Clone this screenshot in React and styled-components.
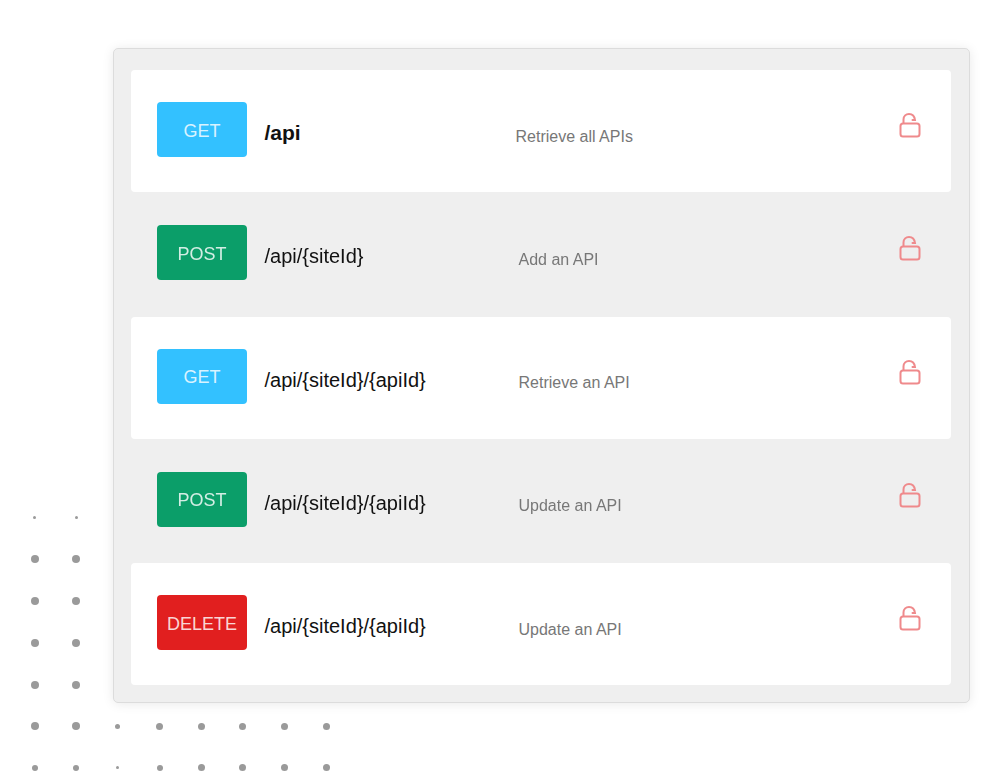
import React from "react";
import styled, { createGlobalStyle } from "styled-components";

const endpoints = [
  { method: "GET", path: "/api", text: "Retrieve all APIs", bold: true, white: true },
  { method: "POST", path: "/api/{siteId}", text: "Add an API" },
  { method: "GET", path: "/api/{siteId}/{apiId}", text: "Retrieve an API", white: true },
  { method: "POST", path: "/api/{siteId}/{apiId}", text: "Update an API" },
  { method: "DELETE", path: "/api/{siteId}/{apiId}", text: "Update an API", white: true },
];

const methodColors = {
  GET: "#33c1ff",
  POST: "#0b9e69",
  DELETE: "#e11f1f",
};

// dot sizes, row by row, of the grid behind the panel
const dotRows = [
  [3, 3, 3, 3, 3, 3, 3, 3],
  [8, 8, 8, 8, 8, 8, 8, 8],
  [8, 8, 8, 8, 8, 8, 8, 8],
  [8, 8, 8, 8, 8, 8, 8, 8],
  [8, 8, 8, 8, 8, 8, 8, 8],
  [8, 8, 5, 7, 7, 7, 7, 7],
  [6, 6, 3, 6, 7, 7, 7, 7],
];

const GlobalStyle = createGlobalStyle`
  html, body {
    margin: 0;
    background: #ffffff;
  }
  body {
    font-family: "Liberation Sans", Arial, sans-serif;
  }
`;

const Page = styled.div`
  position: relative;
  box-sizing: border-box;
  width: 1000px;
  height: 784px;
  padding: 48px 30px 0 113px;
  overflow: hidden;
  filter: blur(0.6px);
`;

const DotGrid = styled.div`
  position: absolute;
  left: 24.5px;
  top: 507.8px;
  display: grid;
  grid-template-columns: repeat(8, 20px);
  grid-auto-rows: 20px;
  gap: 21.7px;
`;

const DotCell = styled.div`
  display: flex;
  align-items: center;
  justify-content: center;
`;

const Dot = styled.span`
  width: ${(p) => p.$size}px;
  height: ${(p) => p.$size}px;
  border-radius: 50%;
  background: #9a9a9a;
`;

const Panel = styled.div`
  position: relative;
  box-sizing: border-box;
  width: 857px;
  height: 655px;
  padding: 21px 18px 17px 17px;
  display: flex;
  flex-direction: column;
  gap: 1px;
  background: #efefef;
  border: 1px solid #dcdcdc;
  border-radius: 5px;
  box-shadow: 0 1px 12px rgba(0, 0, 0, 0.09);
`;

const Row = styled.div`
  box-sizing: border-box;
  height: 122.25px;
  flex: none;
  padding: 32px 30px 0 26px;
  display: flex;
  align-items: flex-start;
  border-radius: 4px;
  background: ${(p) => (p.$white ? "#ffffff" : "transparent")};
`;

const Badge = styled.div`
  flex: none;
  width: 90px;
  height: 55px;
  padding-top: 3px;
  box-sizing: border-box;
  display: flex;
  align-items: center;
  justify-content: center;
  border-radius: 4px;
  background: ${(p) => methodColors[p.$method]};
  color: rgba(255, 255, 255, 0.82);
  font-size: 18px;
`;

const Path = styled.div`
  flex: none;
  width: ${(p) => (p.$bold ? "251px" : "254px")};
  margin-left: 17.5px;
  padding-top: 19px;
  font-size: ${(p) => (p.$bold ? "21px" : "20px")};
  line-height: 24px;
  font-weight: ${(p) => (p.$bold ? 700 : 400)};
  color: #111111;
`;

const Description = styled.div`
  flex: 1;
  padding-top: 24.5px;
  font-size: 16px;
  line-height: 20px;
  color: #777777;
`;

const LockIcon = styled.svg`
  flex: none;
  width: 24px;
  height: 28px;
  margin-top: 9px;
  fill: none;
  stroke: #ef8a8c;
  stroke-width: 2;
  stroke-linecap: round;
`;

function OpenLock() {
  return (
    <LockIcon viewBox="0 0 24 28">
      <rect x="3.5" y="12.5" width="19" height="13" rx="2.5" />
      <path d="M6.5 12 V8.5 C6.5 5 9 3 12 3 C15 3 17.5 5 18 9 L15.5 9" />
    </LockIcon>
  );
}

export default function App() {
  return (
    <Page>
      <GlobalStyle />
      <DotGrid>
        {dotRows.flatMap((row, r) =>
          row.map((size, c) => (
            <DotCell key={`${r}-${c}`}>
              <Dot $size={size} />
            </DotCell>
          ))
        )}
      </DotGrid>
      <Panel>
        {endpoints.map((item, i) => (
          <Row key={i} $white={item.white}>
            <Badge $method={item.method}>{item.method}</Badge>
            <Path $bold={item.bold}>{item.path}</Path>
            <Description>{item.text}</Description>
            <OpenLock />
          </Row>
        ))}
      </Panel>
    </Page>
  );
}
